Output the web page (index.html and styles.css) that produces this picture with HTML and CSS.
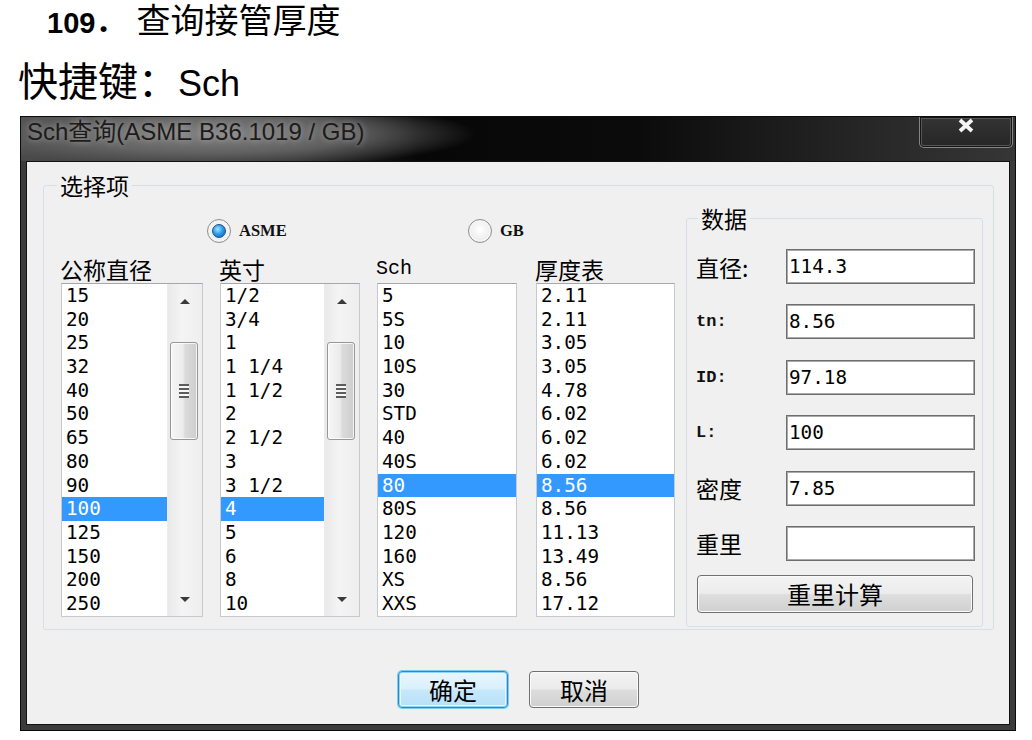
FILE: index.html
```html
<!DOCTYPE html>
<html lang="zh-CN">
<head>
<meta charset="utf-8">
<title>Sch查询</title>
<link rel="stylesheet" href="styles.css">
</head>
<body>
<h1 class="doc-title"><span class="num">109．</span>查询接管厚度</h1>
<p class="shortcut">快捷键：<span class="latin">Sch</span></p>

<div class="dialog">
  <div class="titlebar">
    <span class="title">Sch查询(ASME B36.1019 / GB)</span>
    <span class="close"><svg width="18" height="15" viewBox="0 0 18 15"><path d="M3 2 L15 13 M15 2 L3 13" stroke="#f4f4f4" stroke-width="3.8" fill="none"/></svg></span>
  </div>
  <div class="client">
    <fieldset class="group main-group">
      <legend>选择项</legend>
      <div class="group-body">
        <div class="selector">
          <div class="radios">
            <label class="radio asme"><span class="radio-btn checked"></span><span class="radio-text">ASME</span></label>
            <label class="radio"><span class="radio-btn"></span><span class="radio-text">GB</span></label>
          </div>
          <div class="columns">
            <div class="col">
              <div class="col-head cjk">公称直径</div>
              <div class="listbox">
                <ul class="items">
                  <li>15</li><li>20</li><li>25</li><li>32</li><li>40</li><li>50</li><li>65</li><li>80</li><li>90</li><li class="sel">100</li><li>125</li><li>150</li><li>200</li><li>250</li>
                </ul>
                <div class="scrollbar">
                  <div class="sb-btn"><span class="arrow-up"></span></div>
                  <div class="track"><div class="thumb"><span class="grip"></span></div></div>
                  <div class="sb-btn"><span class="arrow-down"></span></div>
                </div>
              </div>
            </div>
            <div class="col">
              <div class="col-head cjk">英寸</div>
              <div class="listbox">
                <ul class="items">
                  <li>1/2</li><li>3/4</li><li>1</li><li>1 1/4</li><li>1 1/2</li><li>2</li><li>2 1/2</li><li>3</li><li>3 1/2</li><li class="sel">4</li><li>5</li><li>6</li><li>8</li><li>10</li>
                </ul>
                <div class="scrollbar">
                  <div class="sb-btn"><span class="arrow-up"></span></div>
                  <div class="track"><div class="thumb"><span class="grip"></span></div></div>
                  <div class="sb-btn"><span class="arrow-down"></span></div>
                </div>
              </div>
            </div>
            <div class="col">
              <div class="col-head mono-head">Sch</div>
              <div class="listbox narrow">
                <ul class="items">
                  <li>5</li><li>5S</li><li>10</li><li>10S</li><li>30</li><li>STD</li><li>40</li><li>40S</li><li class="sel">80</li><li>80S</li><li>120</li><li>160</li><li>XS</li><li>XXS</li>
                </ul>
              </div>
            </div>
            <div class="col">
              <div class="col-head cjk">厚度表</div>
              <div class="listbox narrow last">
                <ul class="items">
                  <li>2.11</li><li>2.11</li><li>3.05</li><li>3.05</li><li>4.78</li><li>6.02</li><li>6.02</li><li>6.02</li><li class="sel">8.56</li><li>8.56</li><li>11.13</li><li>13.49</li><li>8.56</li><li>17.12</li>
                </ul>
              </div>
            </div>
          </div>
        </div>

        <fieldset class="group data-group">
          <legend>数据</legend>
          <div class="fields">
            <span class="f-label cjk">直径:</span><span class="input">114.3</span>
            <span class="f-label mono">tn:</span><span class="input">8.56</span>
            <span class="f-label mono">ID:</span><span class="input">97.18</span>
            <span class="f-label mono">L:</span><span class="input">100</span>
            <span class="f-label cjk">密度</span><span class="input">7.85</span>
            <span class="f-label cjk">重里</span><span class="input"></span>
          </div>
          <button class="calc-btn" type="button">重里计算</button>
        </fieldset>
      </div>
    </fieldset>

    <div class="actions">
      <button class="btn primary" type="button">确定</button>
      <button class="btn" type="button">取消</button>
    </div>
  </div>
</div>
</body>
</html>
```

FILE: styles.css
```css
* { box-sizing: border-box; }

body {
  margin: 0;
  background: #fff;
  color: #000;
  font-family: "Liberation Sans", "Noto Sans CJK SC", sans-serif;
}

.doc-title {
  margin: 0;
  padding-left: 47px;
  font-family: "Noto Sans CJK SC", sans-serif;
  font-size: 34px;
  line-height: 38px;
  font-weight: 400;
}
.doc-title .num {
  font-family: "Liberation Sans", "Noto Sans CJK SC", sans-serif;
  font-weight: 700;
  font-size: 29px;
  line-height: 1;
  margin-right: 12px;
}

.shortcut {
  margin: 18px 0 0;
  padding-left: 18px;
  font-family: "Noto Sans CJK SC", sans-serif;
  font-size: 40px;
  line-height: 46px;
}
.shortcut .latin {
  font-family: "Liberation Sans", sans-serif;
  font-size: 36px;
  line-height: 1;
}

/* ---------- dialog frame ---------- */
.dialog {
  margin: 14px 0 0 20px;
  width: 996px;
  border: 1px solid #0c0c0c;
  background: #3b3b3b;
  padding: 0 5px 5px;
}

.titlebar {
  display: flex;
  align-items: flex-start;
  justify-content: space-between;
  height: 44px;
  margin: 0 -5px;
  padding: 0 2px 0 6px;
  background:
    radial-gradient(ellipse 260px 34px at 195px 17px, rgba(135,135,135,0.95) 0%, rgba(110,110,110,0.78) 55%, rgba(0,0,0,0) 100%),
    linear-gradient(90deg, #4a4a4a 0%, #2a2a2a 28%, #070707 40%, #0b0b0b 62%, #2a2a2a 88%, #363636 100%);
}
.title {
  font-family: "Liberation Sans", "Noto Sans CJK SC", sans-serif;
  font-size: 24px;
  line-height: 30px;
  color: #1e1b1b;
  text-shadow: 0 0 6px rgba(175,175,175,0.85);
}
.close {
  display: flex;
  justify-content: center;
  align-items: flex-start;
  width: 94px;
  height: 31px;
  padding-top: 1px;
  border: 1px solid #858585;
  border-top: none;
  border-radius: 0 0 5px 5px;
  background: linear-gradient(#343434, #262626);
  box-shadow: inset 0 0 0 1px #151515, inset 0 0 0 2px #555;
}

.client {
  background: #f0f0f0;
  border: 1px solid #111;
  padding: 10px 15px 16px 16px;
}

/* ---------- group boxes ---------- */
.group {
  margin: 0;
  min-width: 0;
  border: 1px solid #d5dfe5;
  border-radius: 3px;
}
.group legend {
  font-family: "Noto Sans CJK SC", sans-serif;
  font-size: 23px;
  line-height: 26px;
  padding: 0 3px;
}
.main-group {
  padding: 0 10px 2px 17px;
}
.main-group > legend { margin-left: -4px; }

.group-body {
  display: grid;
  grid-template-columns: 614px 297px;
  column-gap: 11px;
  align-items: start;
}

/* ---------- selector (left) ---------- */
.selector { padding-top: 21px; }

.radios {
  display: flex;
  align-items: center;
  height: 24px;
  padding-left: 146px;
}
.radio {
  display: flex;
  align-items: center;
  gap: 8px;
}
.radio.asme { width: 261px; }
.radio-btn {
  display: flex;
  align-items: center;
  justify-content: center;
  width: 24px;
  height: 24px;
  border-radius: 50%;
  border: 1px solid #8e8f8f;
  background: radial-gradient(circle at 50% 45%, #ffffff 0%, #f1f1f1 50%, #d4d4d4 100%);
  box-shadow: inset 0 0 0 2px #f4f4f4;
}
.radio-btn.checked::after {
  content: "";
  width: 12px;
  height: 12px;
  border-radius: 50%;
  background: radial-gradient(circle at 40% 35%, #a6e4ff 0%, #2b9ef0 45%, #0c5aa3 100%);
  border: 1px solid #1f4f7c;
}
.radio-text {
  font-family: "Liberation Serif", serif;
  font-weight: 700;
  font-size: 16.5px;
  color: #111;
}

.columns {
  display: grid;
  grid-template-columns: 142px 140px 142px 139px;
  column-gap: 17px;
  margin-top: 15px;
}
.col-head {
  height: 25px;
  line-height: 22px;
  margin-left: -1px;
  white-space: nowrap;
}
.cjk {
  font-family: "Noto Sans CJK SC", sans-serif;
  font-size: 23px;
}
.mono-head {
  font-family: "Liberation Mono", monospace;
  font-size: 20px;
}

.listbox {
  display: flex;
  height: 334px;
  background: #fff;
  border: 1px solid #c6cacf;
  border-top-color: #a4a8ae;
  overflow: hidden;
}
.listbox.narrow { width: 140px; }
.listbox.narrow.last { width: 139px; }

.items {
  flex: 1;
  margin: 0;
  padding: 0;
  list-style: none;
}
.items li {
  height: 23.7px;
  line-height: 23.7px;
  padding-left: 4px;
  font-family: "DejaVu Sans Mono", monospace;
  font-size: 19.3px;
  white-space: pre;
  color: #000;
}
.items li.sel {
  background: #3399ff;
  color: #fff;
}

.scrollbar {
  display: flex;
  flex-direction: column;
  width: 35px;
  background: linear-gradient(90deg, #e9e9e9 0%, #f4f4f4 40%, #eeeeee 100%);
  border-left: 1px solid #ececec;
}
.sb-btn {
  display: flex;
  align-items: center;
  justify-content: center;
  height: 34px;
}
.arrow-up, .arrow-down {
  width: 0;
  height: 0;
  border-left: 5.5px solid transparent;
  border-right: 5.5px solid transparent;
}
.arrow-up { border-bottom: 5px solid #3a3a3a; }
.arrow-down { border-top: 5px solid #3a3a3a; }
.track {
  flex: 1;
  padding-top: 24px;
}
.thumb {
  display: flex;
  align-items: center;
  justify-content: center;
  height: 98px;
  margin: 0 4px 0 2px;
  border: 1px solid #979797;
  border-radius: 3px;
  background: linear-gradient(90deg, #f6f6f6 0%, #ececec 45%, #dbdbdb 55%, #cdcdcd 100%);
  box-shadow: inset 0 0 0 1px rgba(255,255,255,0.8);
}
.grip {
  width: 10px;
  height: 14px;
  background: repeating-linear-gradient(180deg, #5c5c5c 0 2px, #f7f7f7 2px 4px);
}

/* ---------- data group (right) ---------- */
.data-group {
  margin-top: 7px;
  padding: 0 7px 13px 9px;
}
.data-group > legend { margin-left: 2px; }

.fields {
  display: grid;
  grid-template-columns: 90px 189px;
  grid-auto-rows: 35px;
  row-gap: 20.4px;
  align-items: center;
  padding-top: 18px;
}
.f-label { white-space: nowrap; }
.f-label.cjk { font-size: 23px; }
.f-label.mono {
  font-family: "Liberation Mono", monospace;
  font-weight: 700;
  font-size: 17px;
  color: #111;
}
.input {
  display: block;
  height: 35px;
  background: #fff;
  border: 1px solid #6e6e6e;
  box-shadow: inset 0 0 0 1px #a9a9a9;
  padding-left: 2px;
  font-family: "DejaVu Sans Mono", monospace;
  font-size: 19.3px;
  line-height: 33px;
}

.calc-btn {
  display: block;
  width: 276px;
  height: 38px;
  margin: 14px 0 0 1px;
  padding: 0;
  border: 1px solid #707070;
  border-radius: 4px;
  background: linear-gradient(#f3f3f3 0%, #ececec 48%, #dedede 52%, #d0d0d0 100%);
  box-shadow: inset 0 0 0 1px #fbfbfb;
  font-family: "Noto Sans CJK SC", sans-serif;
  font-size: 24px;
  line-height: 36px;
  color: #000;
}

/* ---------- bottom buttons ---------- */
.actions {
  display: flex;
  justify-content: center;
  gap: 21px;
  margin-top: 41px;
}
.btn {
  width: 110px;
  height: 37px;
  padding: 0;
  border: 1px solid #707070;
  border-radius: 4px;
  background: linear-gradient(#f3f3f3 0%, #ebebeb 48%, #dddddd 52%, #cfcfcf 100%);
  box-shadow: inset 0 0 0 1px #fbfbfb;
  font-family: "Noto Sans CJK SC", sans-serif;
  font-size: 24px;
  line-height: 35px;
  color: #000;
}
.btn.primary {
  border-color: #2f87c8;
  background: linear-gradient(#eaf6fd 0%, #d9f0fc 48%, #c6e8fb 52%, #b6e0f8 100%);
  box-shadow: 0 0 0 1px #7fcaf2, inset 0 0 0 1px #8fd3f6, inset 0 0 0 2px #e9f7fe;
}
```
